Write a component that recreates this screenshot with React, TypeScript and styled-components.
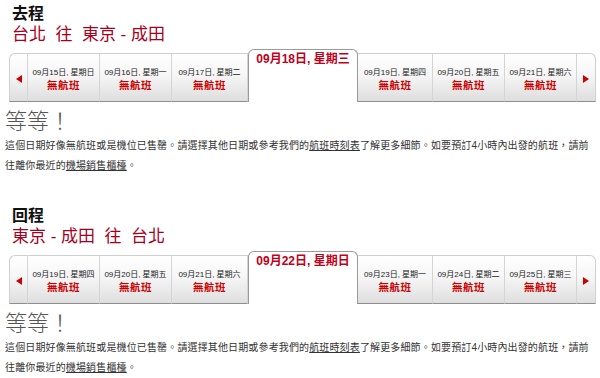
import React from 'react';
import styled, { createGlobalStyle } from 'styled-components';

const GlobalStyle = createGlobalStyle`
    html, body {
        margin: 0;
        padding: 0;
        background: #ffffff;
    }
    body {
        font-family: "Liberation Sans", "Noto Sans CJK TC", sans-serif;
    }
`;

const cjk = `"Liberation Sans", "Noto Sans CJK TC", sans-serif`;

const Page = styled.div`
    width: 600px;
    padding-top: 5px;
`;

const Journey = styled.section`
    & + & {
        margin-top: 31px;
    }
`;

const Heading = styled.h2`
    margin: 0 0 0 12px;
    font-family: ${cjk};
    font-size: 16px;
    line-height: 18px;
    font-weight: bold;
    color: #111;
`;

const Route = styled.div`
    margin: 2px 0 0 12px;
    font-family: ${cjk};
    font-size: 17px;
    line-height: 20px;
    color: #a50021;
    white-space: pre;
`;

const TabBar = styled.div`
    display: flex;
    align-items: flex-end;
    height: 53px;
    margin: 4px 0 0 9px;
`;

const CellBase = styled.div`
    box-sizing: border-box;
    height: 49px;
    border-top: 1px solid #cfcfcf;
    border-bottom: 1px solid #8e8e8e;
    border-right: 1px solid #d4d4d4;
    background: linear-gradient(#ffffff 0%, #f6f6f6 45%, #dedede 100%);
`;

const ArrowCell = styled(CellBase)<{ side: 'left' | 'right' }>`
    width: 19px;
    display: flex;
    align-items: center;
    justify-content: center;
    border-left: ${({ side }) => (side === 'left' ? '1px solid #cfcfcf' : 'none')};
    border-right: ${({ side }) => (side === 'right' ? '1px solid #cfcfcf' : '1px solid #d4d4d4')};
    border-radius: ${({ side }) => (side === 'left' ? '6px 0 0 0' : '0 6px 0 0')};
`;

const Arrow = styled.span<{ side: 'left' | 'right' }>`
    width: 0;
    height: 0;
    border-top: 4.5px solid transparent;
    border-bottom: 4.5px solid transparent;
    border-right: ${({ side }) => (side === 'left' ? '6px solid #cc0000' : 'none')};
    border-left: ${({ side }) => (side === 'right' ? '6px solid #cc0000' : 'none')};
    margin-top: 2px;
`;

const DayCell = styled(CellBase)<{ w: number }>`
    width: ${({ w }) => w}px;
    padding-top: 13px;
    text-align: center;
`;

const DateLine = styled.div`
    font-family: ${cjk};
    font-size: 8px;
    line-height: 11px;
    color: #222;
    white-space: nowrap;
`;

const NoFlight = styled.div`
    font-family: ${cjk};
    font-size: 10.5px;
    line-height: 14px;
    font-weight: bold;
    letter-spacing: 0.5px;
    color: #cc0000;
`;

const SelectedTab = styled.div`
    box-sizing: border-box;
    width: 110px;
    height: 53px;
    padding-top: 2px;
    border: 1px solid #9a9a9a;
    border-bottom: none;
    border-radius: 6px 6px 0 0;
    background: #ffffff;
    text-align: center;
    font-family: ${cjk};
    font-size: 12px;
    line-height: 14px;
    font-weight: bold;
    color: #c0001a;
    white-space: nowrap;
`;

const Wait = styled.div`
    margin: 7px 0 0 5px;
    font-family: ${cjk};
    font-size: 22px;
    line-height: 26px;
    font-weight: 300;
    color: #555;
`;

const Notice = styled.p`
    margin: 1px 0 0 5px;
    width: 592px;
    font-family: ${cjk};
    font-size: 10px;
    line-height: 20px;
    letter-spacing: 0.14px;
    color: #333;
    white-space: nowrap;
`;

const Link = styled.a`
    color: #333;
    text-decoration: underline;
`;

interface JourneyData {
    title: string;
    route: string;
    before: string[];
    selected: string;
    after: string[];
}

const journeys: JourneyData[] = [
    {
        title: '去程',
        route: '台北  往  東京 - 成田',
        before: ['09月15日, 星期日', '09月16日, 星期一', '09月17日, 星期二'],
        selected: '09月18日, 星期三',
        after: ['09月19日, 星期四', '09月20日, 星期五', '09月21日, 星期六'],
    },
    {
        title: '回程',
        route: '東京 - 成田  往  台北',
        before: ['09月19日, 星期四', '09月20日, 星期五', '09月21日, 星期六'],
        selected: '09月22日, 星期日',
        after: ['09月23日, 星期一', '09月24日, 星期二', '09月25日, 星期三'],
    },
];

const beforeWidths = [72, 72, 76];
const afterWidths = [75, 72, 72];

const App: React.FC = () => (
    <Page>
        <GlobalStyle />
        {journeys.map((j) => (
            <Journey key={j.title}>
                <Heading>{j.title}</Heading>
                <Route>{j.route}</Route>
                <TabBar>
                    <ArrowCell side="left">
                        <Arrow side="left" />
                    </ArrowCell>
                    {j.before.map((d, i) => (
                        <DayCell key={d} w={beforeWidths[i]}>
                            <DateLine>{d}</DateLine>
                            <NoFlight>無航班</NoFlight>
                        </DayCell>
                    ))}
                    <SelectedTab>{j.selected}</SelectedTab>
                    {j.after.map((d, i) => (
                        <DayCell key={d} w={afterWidths[i]}>
                            <DateLine>{d}</DateLine>
                            <NoFlight>無航班</NoFlight>
                        </DayCell>
                    ))}
                    <ArrowCell side="right">
                        <Arrow side="right" />
                    </ArrowCell>
                </TabBar>
                <Wait>等等！</Wait>
                <Notice>
                    這個日期好像無航班或是機位已售罄。請選擇其他日期或參考我們的
                    <Link href="#">航班時刻表</Link>
                    了解更多細節。如要預訂4小時內出發的航班，請前
                    <br />
                    往離你最近的
                    <Link href="#">機場銷售櫃檯</Link>。
                </Notice>
            </Journey>
        ))}
    </Page>
);

export default App;
